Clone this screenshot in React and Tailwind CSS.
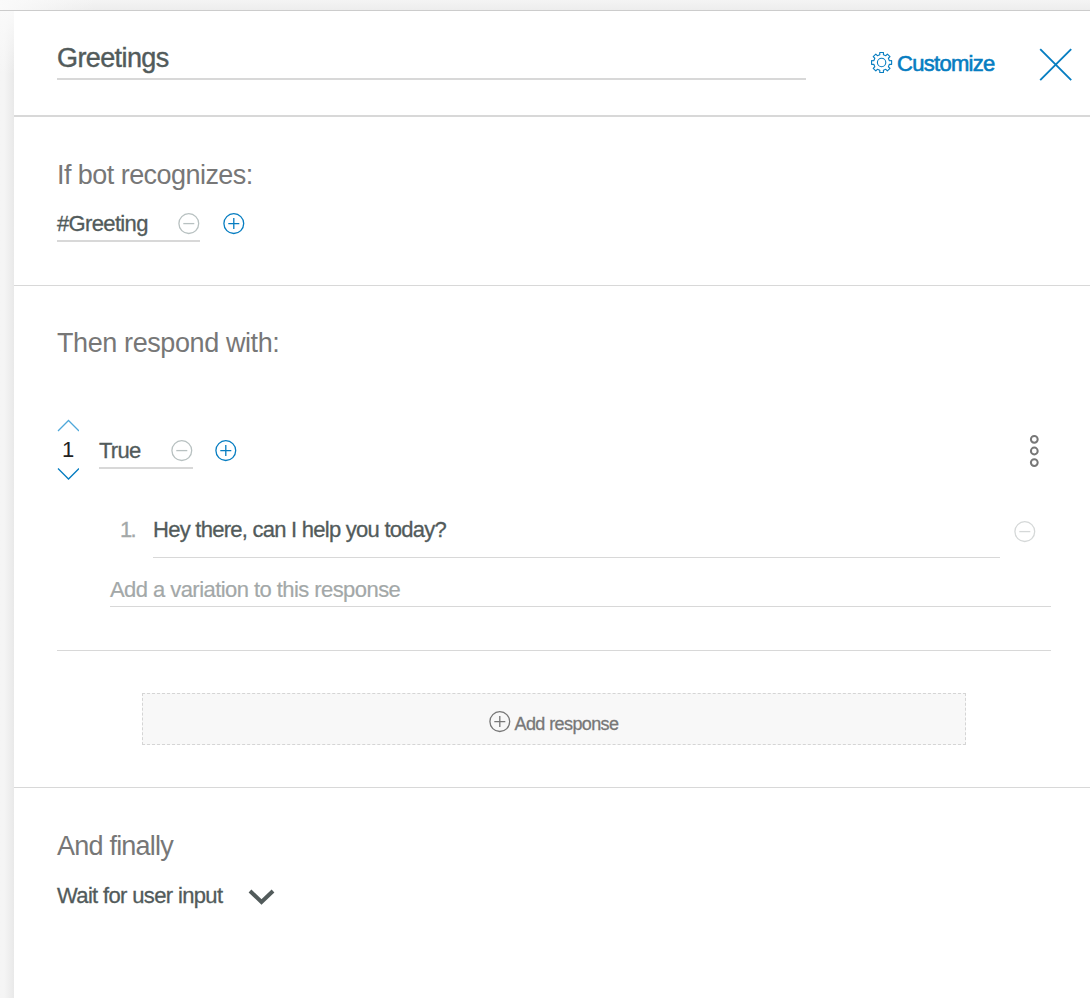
import React from "react";

function CircleIcon({ plus = false, className = "" }) {
  return (
    <svg viewBox="0 0 22 22" className={"size-[22px] shrink-0 overflow-visible " + className} fill="none" stroke="currentColor" strokeWidth="1.3">
      <circle cx="10.8" cy="10.6" r="9.9" />
      <path d={plus ? "M5.3 10.6H16.3M10.8 5.1V16.1" : "M5.3 10.6H16.3"} />
    </svg>
  );
}

const TEETH = 8;

function gearPath() {
  const pts = [];
  for (let i = 0; i < TEETH; i++) {
    const c = (i * 360) / TEETH;
    [[-13, 8], [-10.5, 10.2], [10.5, 10.2], [13, 8]].forEach(([a, r]) => {
      const t = ((c + a) * Math.PI) / 180;
      pts.push((10.6 + r * Math.sin(t)).toFixed(2) + " " + (10.5 - r * Math.cos(t)).toFixed(2));
    });
  }
  return "M" + pts.join("L") + "Z";
}

function Gear() {
  return (
    <svg viewBox="0 0 22 22" className="mt-px size-[22px] shrink-0 overflow-visible" fill="none" stroke="currentColor" strokeWidth="1.1" strokeLinejoin="round">
      <path d={gearPath()} />
      <circle cx="10.6" cy="10.5" r="4.2" />
    </svg>
  );
}

function Heading({ className, children }) {
  return <h2 className={"text-[27px] leading-8 font-normal text-[#777777] whitespace-nowrap " + className}>{children}</h2>;
}

export default function App() {
  return (
    <div className="flex h-[998px] w-[1090px] flex-col overflow-hidden bg-[#f4f4f4] font-['Liberation_Sans',Arial,sans-serif] text-[22px] leading-[26px] text-[#525b5b]">
      <div className="h-[11px] shrink-0 border-b border-[#cccccc] bg-linear-to-b from-[#f4f4f4] to-[#ededed]">
        <div className="h-full w-24 bg-linear-to-r from-[#fafafa] to-transparent" />
      </div>
      <div className="flex flex-1">
        <div className="w-[14px] shrink-0 bg-linear-to-r from-[#f5f5f5] from-30% to-[#e9e9e9]">
          <div className="h-16 bg-linear-to-b from-[#fafafa] to-transparent" />
        </div>
        <main className="flex w-[1076px] flex-col bg-white">
          <header className="flex h-[106px] items-start border-b-2 border-[#d8d8d8] pl-[43px]">
            <div className="mt-[31px] h-[38px] w-[749px] border-b-2 border-[#d8d8d8] text-[27px] leading-8 tracking-[-0.6px] [-webkit-text-stroke:0.4px]">
              Greetings
            </div>
            <button className="mt-[40px] ml-[65px] flex w-[124px] gap-[4px] text-[#067dc1] tracking-[-0.7px] [-webkit-text-stroke:0.6px]">
              <Gear />
              <span>Customize</span>
            </button>
            <button className="mt-[37px] ml-[44px]">
              <svg viewBox="0 0 34 34" className="size-[34px]" fill="none" stroke="#067dc1" strokeWidth="1.9">
                <path d="M1.2 1.2L32.2 32.2M32.2 1.2L1.2 32.2" />
              </svg>
            </button>
          </header>

          <section className="h-[169px] border-b border-[#d8d8d8] pt-[42px] pl-[43px]">
            <Heading className="tracking-[-0.55px]">If bot recognizes:</Heading>
            <div className="mt-5 flex">
              <div className="flex h-[31px] w-[143px] justify-between border-b-2 border-[#d8d8d8]">
                <span className="tracking-[-0.65px] [-webkit-text-stroke:0.3px]">#Greeting</span>
                <CircleIcon className="mt-[2px] text-[#b8c1c1]" />
              </div>
              <CircleIcon plus className="mt-[2px] ml-[23px] text-[#067dc1]" />
            </div>
          </section>

          <section className="h-[502px] border-b border-[#d8d8d8] pt-[41px] pr-[39px] pl-[43px]">
            <Heading className="tracking-[-0.4px]">Then respond with:</Heading>
            <div className="mt-[60px] flex h-[62px]">
              <div className="flex w-[22px] flex-col items-center">
                <svg viewBox="0 0 22 13" className="h-[13px] w-[22px]" fill="none" stroke="#4fa8da" strokeWidth="1.3">
                  <path d="M1 12L11.5 1.5L22 12" />
                </svg>
                <span className="mt-[5px] h-6 text-[#222222]">1</span>
                <svg viewBox="0 0 22 13" className="mt-[7px] h-[13px] w-[22px]" fill="none" stroke="#067dc1" strokeWidth="1.3">
                  <path d="M1 0.5L11.5 11L22 0.5" />
                </svg>
              </div>
              <div className="mt-[19px] ml-[20px] flex h-[31px] w-[94px] justify-between border-b-2 border-[#d8d8d8]">
                <span className="tracking-[-0.75px] [-webkit-text-stroke:0.3px]">True</span>
                <CircleIcon className="mt-[2px] text-[#b8c1c1]" />
              </div>
              <CircleIcon plus className="mt-[21px] ml-[22px] text-[#067dc1]" />
              <svg viewBox="0 0 10 34" className="mt-[15px] mr-[12px] ml-auto h-[34px] w-[10px]" fill="none" stroke="#777777" strokeWidth="2">
                <circle cx="5.3" cy="5.3" r="3.4" />
                <circle cx="5.3" cy="17" r="3.4" />
                <circle cx="5.3" cy="28.6" r="3.4" />
              </svg>
            </div>
            <div className="mt-[36px] flex h-[41px]">
              <span className="ml-[63px] w-[33px] text-[#a3a8a8] tracking-[-1.8px] [-webkit-text-stroke:0.3px]">1.</span>
              <div className="w-[847px] border-b border-[#d8d8d8] tracking-[-0.74px] [-webkit-text-stroke:0.3px]">
                Hey there, can I help you today?
              </div>
              <CircleIcon className="mt-[4px] ml-[14px] text-[#d5d8d8]" />
            </div>
            <div className="mt-[19px] ml-[53px] h-[30px] border-b border-[#d8d8d8] text-[#a3a8a8] tracking-[-0.56px] [-webkit-text-stroke:0.2px]">
              Add a variation to this response
            </div>
            <div className="mt-[43px] border-b border-[#d8d8d8]" />
            <button className="mx-auto mt-[42px] flex h-[52px] w-[824px] justify-center border border-dashed border-[#d5d5d5] bg-[#f8f8f8] text-[#777777]">
              <CircleIcon plus className="mt-[17px]" />
              <span className="mt-[17px] mr-px ml-1 text-[18px] tracking-[-0.6px] [-webkit-text-stroke:0.3px]">Add response</span>
            </button>
          </section>

          <section className="pt-[42px] pl-[43px]">
            <Heading className="tracking-[-0.78px]">And finally</Heading>
            <div className="mt-[21px] flex">
              <span className="w-[191px] tracking-[-0.65px] [-webkit-text-stroke:0.3px]">Wait for user input</span>
              <svg viewBox="0 0 27 18" className="mt-[5px] h-[18px] w-[27px]" fill="none" stroke="#525b5b" strokeWidth="4">
                <path d="M2 3L13.5 14L25 3" />
              </svg>
            </div>
          </section>
        </main>
      </div>
    </div>
  );
}
